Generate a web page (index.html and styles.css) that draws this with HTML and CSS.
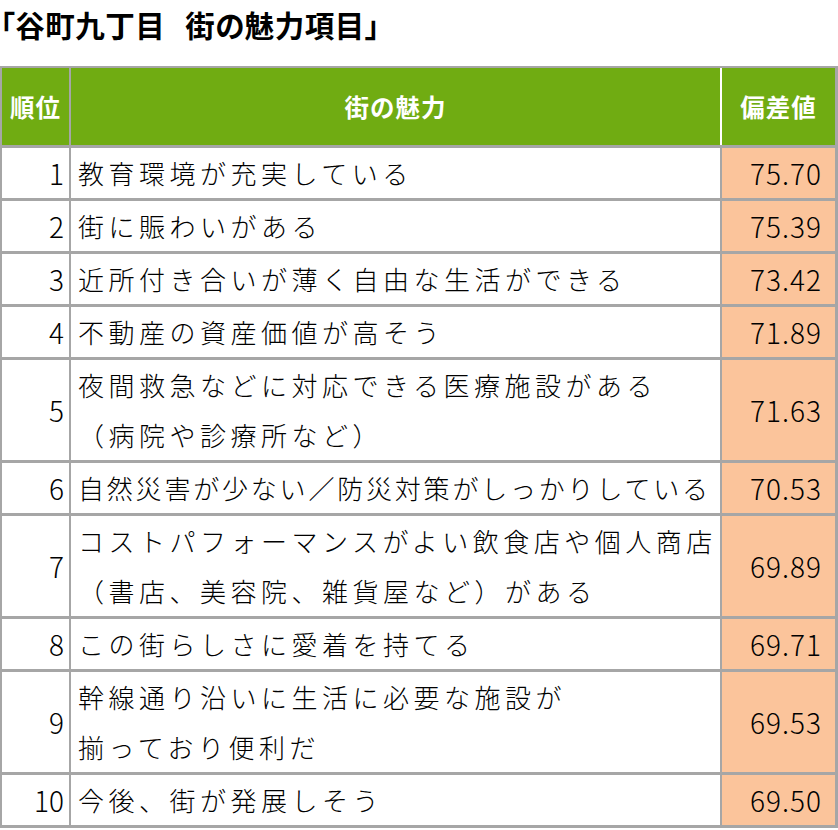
FILE: index.html
```html
<!DOCTYPE html>
<html lang="ja">
<head>
<meta charset="utf-8">
<title>谷町九丁目 街の魅力項目</title>
<link rel="stylesheet" href="styles.css">
</head>
<body>
<h1 class="title">「谷町九丁目<span class="gap"></span>街の魅力項目」</h1>
<div class="table">
  <div class="head">順位</div>
  <div class="head">街の魅力</div>
  <div class="head head-val">偏差値</div>

  <div class="rank">1</div><div class="item">教育環境が充実している</div><div class="val">75.70</div>
  <div class="rank">2</div><div class="item">街に賑わいがある</div><div class="val">75.39</div>
  <div class="rank">3</div><div class="item">近所付き合いが薄く自由な生活ができる</div><div class="val">73.42</div>
  <div class="rank">4</div><div class="item">不動産の資産価値が高そう</div><div class="val">71.89</div>
  <div class="rank">5</div><div class="item two">夜間救急などに対応できる医療施設がある<br>（病院や診療所など）</div><div class="val">71.63</div>
  <div class="rank">6</div><div class="item tight">自然災害が少ない／防災対策がしっかりしている</div><div class="val">70.53</div>
  <div class="rank">7</div><div class="item two">コストパフォーマンスがよい飲食店や個人商店<br>（書店、美容院、雑貨屋など）がある</div><div class="val">69.89</div>
  <div class="rank">8</div><div class="item">この街らしさに愛着を持てる</div><div class="val">69.71</div>
  <div class="rank">9</div><div class="item two">幹線通り沿いに生活に必要な施設が<br>揃っており便利だ</div><div class="val">69.53</div>
  <div class="rank">10</div><div class="item">今後、街が発展しそう</div><div class="val">69.50</div>
</div>
</body>
</html>
```

FILE: styles.css
```css
html, body {
  margin: 0;
  padding: 0;
  background: #ffffff;
}

body {
  width: 838px;
  font-family: "Noto Sans CJK JP", "Noto Sans", sans-serif;
  color: #000000;
}

.title {
  margin: 0 0 18px 0;
  height: 48px;
  line-height: 48px;
  font-size: 29.5px;
  font-weight: 700;
  letter-spacing: 0.5px;
  color: #000;
  font-feature-settings: "palt";
  white-space: nowrap;
}

.gap {
  display: inline-block;
  width: 20px;
}

.table {
  display: grid;
  grid-template-columns: 67px 649px 113px;
  grid-auto-rows: auto;
  column-gap: 2px;
  row-gap: 3px;
  padding: 2px 3px 3px 2px;
  background: #a6a6a6;
  width: 833px;
}

.head {
  height: 77px;
  background: #70ac12;
  color: #ffffff;
  font-size: 24.5px;
  font-weight: 700;
  display: flex;
  align-items: center;
  justify-content: center;
  letter-spacing: 1px;
}

.head-val {
  box-shadow: -2px 0 0 #ffffff;
}

.rank {
  background: #ffffff;
  display: flex;
  align-items: center;
  justify-content: flex-end;
  padding-right: 5px;
  font-size: 28px;
  font-weight: 300;
  line-height: 50px;
}

.item {
  background: #ffffff;
  padding-left: 7px;
  font-size: 26px;
  font-weight: 300;
  letter-spacing: 4.5px;
  line-height: 50px;
  white-space: nowrap;
  overflow: hidden;
}

.item.tight {
  letter-spacing: 2.8px;
}

.val {
  background: #fbc49b;
  display: flex;
  align-items: center;
  justify-content: flex-end;
  padding-right: 13px;
  font-size: 28px;
  font-weight: 300;
  letter-spacing: 1px;
  line-height: 50px;
}
```
